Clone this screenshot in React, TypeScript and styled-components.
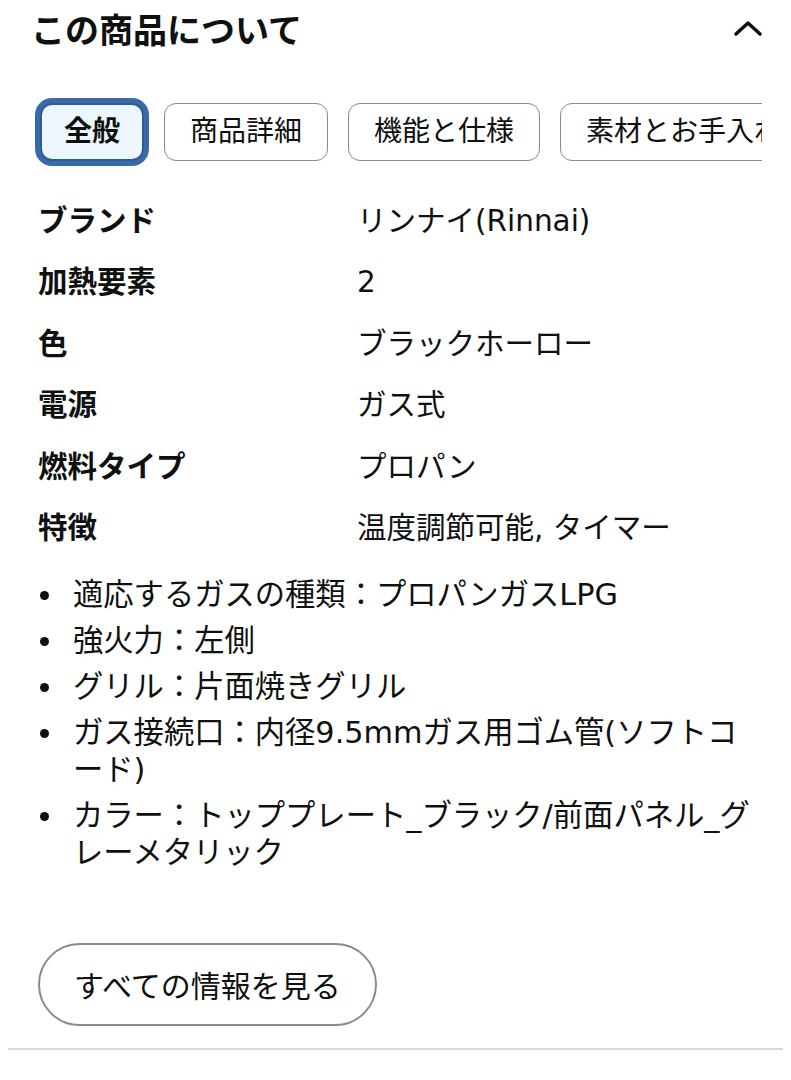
import React from "react";
import styled, { createGlobalStyle } from "styled-components";

const Global = createGlobalStyle`
  html, body { margin: 0; padding: 0; background: #ffffff; }
  body {
    font-family: "DejaVu Sans", "Noto Sans CJK JP", "Noto Sans", sans-serif;
    color: #0f1111;
  }
  * { box-sizing: border-box; }
`;

const Page = styled.div`
  width: 791px;
  padding: 10px 0 0 0;
`;

const Content = styled.div`
  padding: 0 29px 0 36px;
`;

const Header = styled.div`
  display: flex;
  align-items: center;
  justify-content: space-between;
  height: 42px;
`;

const Title = styled.h2`
  margin: 0 0 0 -5px;
  font-size: 34px;
  line-height: 42px;
  font-weight: 700;
  letter-spacing: 0;
`;

const Chevron = styled.svg`
  width: 28px;
  height: 16px;
  margin-top: -6px;
`;

const TabRow = styled.div`
  display: flex;
  align-items: center;
  gap: 20px;
  overflow: hidden;
  margin: 45px 0 0 -6px;
  padding: 6px 0 6px 10px;
`;

const Tab = styled.button<{ $active?: boolean }>`
  flex: 0 0 auto;
  height: 58px;
  padding: 0 ${(p) => (p.$active ? "22px" : "25px")};
  border-radius: 12px;
  font-family: inherit;
  font-size: 28px;
  line-height: 1;
  white-space: nowrap;
  color: #0f1111;
  font-weight: ${(p) => (p.$active ? 700 : 400)};
  background: ${(p) => (p.$active ? "#edf6fd" : "#ffffff")};
  border: ${(p) => (p.$active ? "2px solid #2a5c9c" : "1px solid #888c8c")};
  box-shadow: ${(p) => (p.$active ? "0 0 0 5px #3a69a6" : "none")};
`;

const SpecTable = styled.div`
  display: grid;
  grid-template-columns: 319px 1fr;
  row-gap: 21.4px;
  margin-top: 34px;
  padding-left: 2px;
`;

const SpecLabel = styled.div`
  font-size: 29.5px;
  line-height: 40px;
  height: 40px;
  font-weight: 700;
`;

const SpecValue = styled.div`
  font-size: 29.5px;
  line-height: 40px;
  height: 40px;
  font-weight: 400;
`;

const Bullets = styled.ul`
  list-style: none;
  margin: 28px 0 0 0;
  padding: 0 0 0 4px;
  display: flex;
  flex-direction: column;
  gap: 9px;
`;

const BulletItem = styled.li`
  display: flex;
  align-items: flex-start;
  gap: 24px;
  font-size: 30.3px;
  line-height: 37px;
`;

const Dot = styled.span`
  flex: 0 0 auto;
  width: 9px;
  height: 9px;
  border-radius: 50%;
  background: #0f1111;
  margin-top: 15px;
`;

const BulletText = styled.span`
  flex: 1 1 auto;
  min-width: 0;
`;

const MoreButton = styled.button`
  margin-top: 72px;
  margin-left: 2px;
  height: 83px;
  padding: 0 34px;
  border-radius: 42px;
  border: 2px solid #888c8c;
  background: #ffffff;
  font-family: inherit;
  font-size: 30px;
  color: #0f1111;
  cursor: pointer;
`;

const Divider = styled.hr`
  margin: 22px 8px 0 8px;
  border: 0;
  height: 2px;
  background: #d5d9d9;
`;

const tabs = ["全般", "商品詳細", "機能と仕様", "素材とお手入れ"];

const specs: [string, string][] = [
  ["ブランド", "リンナイ(Rinnai)"],
  ["加熱要素", "2"],
  ["色", "ブラックホーロー"],
  ["電源", "ガス式"],
  ["燃料タイプ", "プロパン"],
  ["特徴", "温度調節可能, タイマー"],
];

const bullets = [
  "適応するガスの種類：プロパンガスLPG",
  "強火力：左側",
  "グリル：片面焼きグリル",
  "ガス接続口：内径9.5mmガス用ゴム管(ソフトコード)",
  "カラー：トッププレート_ブラック/前面パネル_グレーメタリック",
];

export default function App() {
  return (
    <Page>
      <Global />
      <Content>
        <Header>
          <Title>この商品について</Title>
          <Chevron viewBox="0 0 28 16" fill="none">
            <polyline
              points="2,14 14,3 26,14"
              stroke="#0f1111"
              strokeWidth="3.5"
              strokeLinecap="round"
              strokeLinejoin="round"
            />
          </Chevron>
        </Header>
        <TabRow>
          {tabs.map((t, i) => (
            <Tab key={t} $active={i === 0}>
              {t}
            </Tab>
          ))}
        </TabRow>
        <SpecTable>
          {specs.map(([k, v]) => (
            <React.Fragment key={k}>
              <SpecLabel>{k}</SpecLabel>
              <SpecValue>{v}</SpecValue>
            </React.Fragment>
          ))}
        </SpecTable>
        <Bullets>
          {bullets.map((b) => (
            <BulletItem key={b}>
              <Dot />
              <BulletText>{b}</BulletText>
            </BulletItem>
          ))}
        </Bullets>
        <MoreButton>すべての情報を見る</MoreButton>
      </Content>
      <Divider />
    </Page>
  );
}
